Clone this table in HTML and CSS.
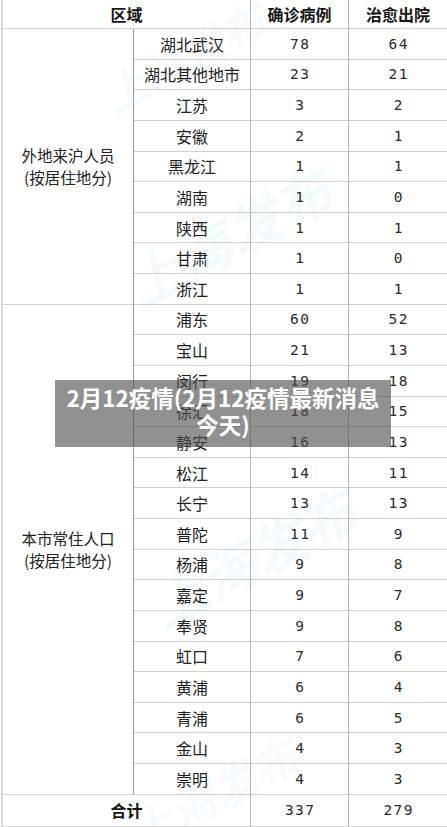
FILE: index.html
```html
<!DOCTYPE html>
<html lang="zh">
<head>
<meta charset="utf-8">
<title>2月12疫情</title>
<link rel="stylesheet" href="styles.css">
</head>
<body>
<div class="page">
  <div class="watermarks" aria-hidden="true">
    <span class="wm wm-1">上海发布</span>
    <span class="wm wm-2">上海发布</span>
    <span class="wm wm-3">上海发布</span>
    <span class="wm wm-4">上海发布</span>
  </div>
  <div class="grid">
    <div class="cell head span2">区域</div>
    <div class="cell head">确诊病例</div>
    <div class="cell head">治愈出院</div>

    <div class="cell group g1">外地来沪人员<br>(按居住地分)</div>
    <div class="cell city">湖北武汉</div><div class="cell num">78</div><div class="cell num">64</div>
    <div class="cell city">湖北其他地市</div><div class="cell num">23</div><div class="cell num">21</div>
    <div class="cell city">江苏</div><div class="cell num">3</div><div class="cell num">2</div>
    <div class="cell city">安徽</div><div class="cell num">2</div><div class="cell num">1</div>
    <div class="cell city">黑龙江</div><div class="cell num">1</div><div class="cell num">1</div>
    <div class="cell city">湖南</div><div class="cell num">1</div><div class="cell num">0</div>
    <div class="cell city">陕西</div><div class="cell num">1</div><div class="cell num">1</div>
    <div class="cell city">甘肃</div><div class="cell num">1</div><div class="cell num">0</div>
    <div class="cell city">浙江</div><div class="cell num">1</div><div class="cell num">1</div>

    <div class="cell group g2">本市常住人口<br>(按居住地分)</div>
    <div class="cell city">浦东</div><div class="cell num">60</div><div class="cell num">52</div>
    <div class="cell city">宝山</div><div class="cell num">21</div><div class="cell num">13</div>
    <div class="cell city">闵行</div><div class="cell num">19</div><div class="cell num">18</div>
    <div class="cell city">徐汇</div><div class="cell num">18</div><div class="cell num">15</div>
    <div class="cell city">静安</div><div class="cell num">16</div><div class="cell num">13</div>
    <div class="cell city">松江</div><div class="cell num">14</div><div class="cell num">11</div>
    <div class="cell city">长宁</div><div class="cell num">13</div><div class="cell num">13</div>
    <div class="cell city">普陀</div><div class="cell num">11</div><div class="cell num">9</div>
    <div class="cell city">杨浦</div><div class="cell num">9</div><div class="cell num">8</div>
    <div class="cell city">嘉定</div><div class="cell num">9</div><div class="cell num">7</div>
    <div class="cell city">奉贤</div><div class="cell num">9</div><div class="cell num">8</div>
    <div class="cell city">虹口</div><div class="cell num">7</div><div class="cell num">6</div>
    <div class="cell city">黄浦</div><div class="cell num">6</div><div class="cell num">4</div>
    <div class="cell city">青浦</div><div class="cell num">6</div><div class="cell num">5</div>
    <div class="cell city">金山</div><div class="cell num">4</div><div class="cell num">3</div>
    <div class="cell city">崇明</div><div class="cell num">4</div><div class="cell num">3</div>

    <div class="cell head total span2">合计</div>
    <div class="cell num total">337</div>
    <div class="cell num total">279</div>
  </div>
  <div class="banner">2月12疫情(2月12疫情最新消息今天)</div>
</div>
</body>
</html>
```

FILE: styles.css
```css
html, body {
  margin: 0;
  padding: 0;
  background: #ffffff;
}

.page {
  position: relative;
  width: 447px;
  height: 827px;
  overflow: hidden;
  font-family: "Noto Sans CJK SC", "Noto Sans", sans-serif;
  color: #222;
}

.grid {
  position: relative;
  z-index: 1;
  margin-left: 1px;
  width: 445px;
  display: grid;
  grid-template-columns: 131px 117px 98px 99px;
  grid-template-rows: 29px repeat(25, 30.64px) 32px;
  border-left: 2px solid #d9d9d9;
  box-sizing: border-box;
}

.cell {
  display: flex;
  align-items: center;
  justify-content: center;
  text-align: center;
  box-sizing: border-box;
  border-bottom: 1px solid #cfcfcf;
  border-right: 1px solid #b5b5b5;
  font-size: 16px;
  line-height: 22px;
  white-space: nowrap;
}

.span2 {
  grid-column: span 2;
}

.head {
  font-weight: 700;
  color: #151515;
  font-size: 16px;
}

.group {
  grid-column: 1;
  font-size: 15.5px;
  line-height: 22px;
  border-right-color: #9a9a9a;
  border-bottom-color: #d0d0d0;
  padding-bottom: 1px;
}

.g1 {
  grid-row: 2 / span 9;
}

.g2 {
  grid-row: 11 / span 16;
}

.city {
  grid-column: 2;
  color: #1e1e1e;
}

.num {
  font-family: "DejaVu Sans Mono", "Liberation Mono", monospace;
  font-size: 14.5px;
  letter-spacing: 1.5px;
  padding-left: 1.5px;
  color: #2a2a2a;
}

.total {
  border-bottom-color: #d4d4d4;
}

.watermarks {
  position: absolute;
  inset: 0;
  z-index: 0;
  pointer-events: none;
}

.wm {
  position: absolute;
  font-family: "Noto Sans CJK SC", sans-serif;
  font-weight: 700;
  font-style: italic;
  color: rgba(90, 190, 225, 0.08);
  white-space: nowrap;
  transform: rotate(-28deg);
  transform-origin: center;
}

.wm-1 {
  left: 95px;
  top: 25px;
  font-size: 44px;
}

.wm-2 {
  left: 115px;
  top: 195px;
  font-size: 56px;
}

.wm-3 {
  left: 140px;
  top: 515px;
  font-size: 56px;
}

.wm-4 {
  left: 120px;
  top: 760px;
  font-size: 46px;
}

.banner {
  position: absolute;
  z-index: 2;
  left: 55px;
  top: 380px;
  width: 336px;
  height: 67px;
  box-sizing: border-box;
  padding: 4px 10px 0;
  background: rgba(78, 78, 78, 0.62);
  color: #ffffff;
  font-family: "Noto Sans CJK SC", "Noto Sans", sans-serif;
  font-weight: 700;
  font-size: 22.5px;
  line-height: 27px;
  text-align: center;
}
```
